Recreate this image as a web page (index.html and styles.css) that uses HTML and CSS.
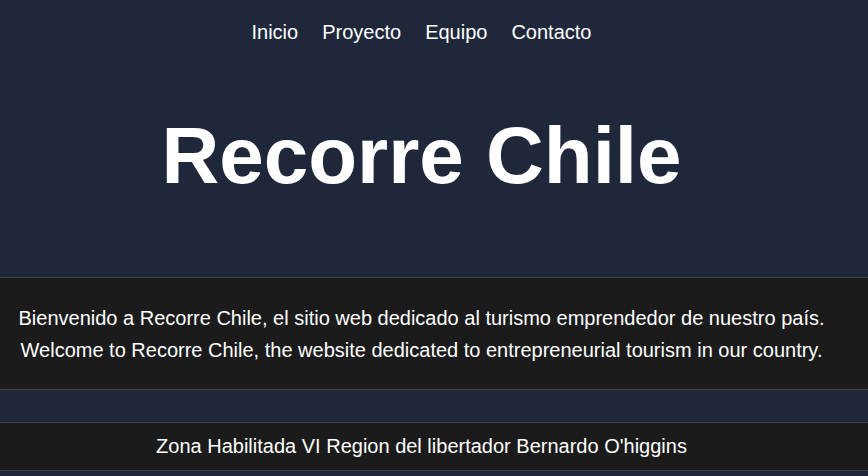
FILE: index.html
```html
<!DOCTYPE html>
<html lang="es">
<head>
<meta charset="utf-8">
<title>Recorre Chile</title>
<link rel="stylesheet" href="styles.css">
</head>
<body>
<nav class="nav">
  <a href="#">Inicio</a>
  <a href="#">Proyecto</a>
  <a href="#">Equipo</a>
  <a href="#">Contacto</a>
</nav>
<h1 class="title">Recorre Chile</h1>
<section class="intro">
  <p>Bienvenido a Recorre Chile, el sitio web dedicado al turismo emprendedor de nuestro país.</p>
  <p>Welcome to Recorre Chile, the website dedicated to entrepreneurial tourism in our country.</p>
</section>
<section class="zone">
  <p>Zona Habilitada VI Region del libertador Bernardo O'higgins</p>
</section>
</body>
</html>
```

FILE: styles.css
```css
html, body {
  margin: 0;
  padding: 0;
  background: #1f273b;
  color: #ffffff;
  font-family: "Liberation Sans", Arial, sans-serif;
  overflow: hidden;
}
body {
  padding-right: 25px;
}
.nav {
  display: flex;
  justify-content: center;
  gap: 24px;
  padding-top: 21px;
  font-size: 20px;
  line-height: 23px;
}
.nav a {
  color: #ffffff;
  text-decoration: none;
}
.title {
  margin: 66px 0 0;
  text-align: center;
  font-size: 80px;
  line-height: 92px;
  font-weight: bold;
}
.intro, .zone {
  background: #1b1b1b;
  border-top: 1px solid #444448;
  border-bottom: 1px solid #444448;
  margin-right: -25px;
  padding-right: 25px;
  text-align: center;
  font-size: 20px;
}
.intro {
  margin-top: 75px;
  padding-top: 24px;
  padding-bottom: 23px;
  line-height: 32px;
}
.intro p, .zone p {
  margin: 0;
}
.zone {
  margin-top: 32px;
  padding-top: 12px;
  padding-bottom: 12px;
  line-height: 23px;
}
```
